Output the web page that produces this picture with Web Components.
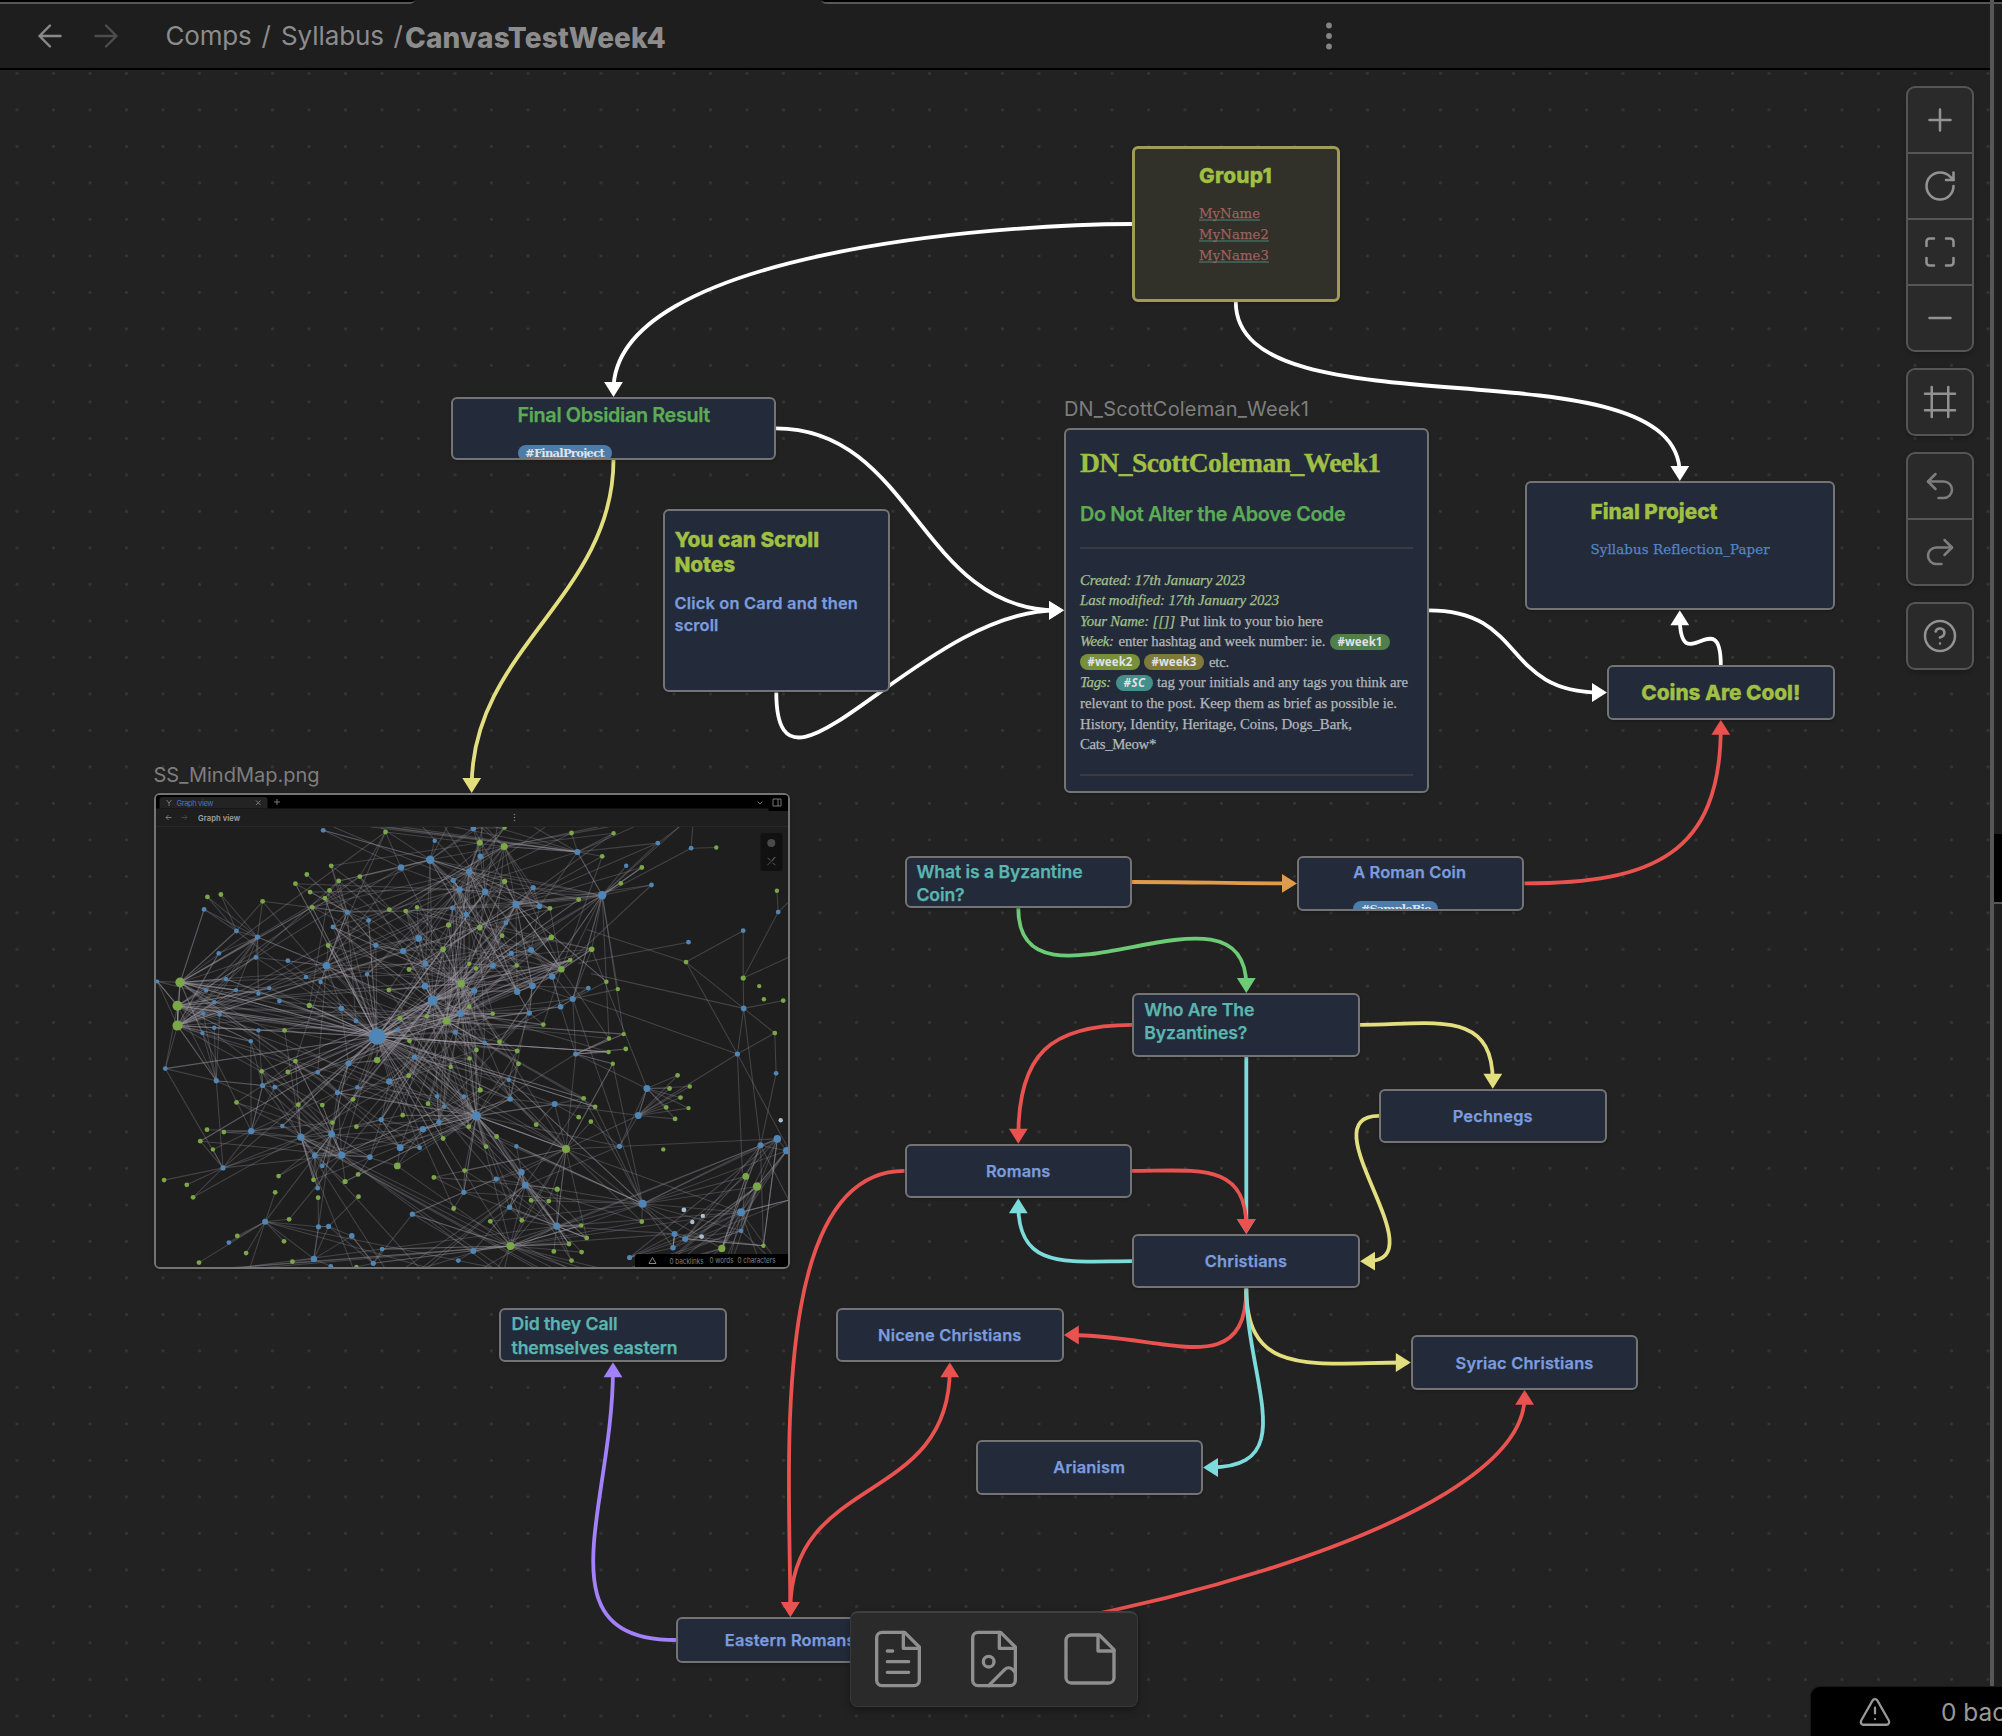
<!DOCTYPE html>
<html lang="en">
<head>
<meta charset="utf-8">
<title>CanvasTestWeek4</title>
<style>
  html, body { margin: 0; height: 100%; background: #1e1e1e; overflow: hidden; }
  body { font-family: Inter, "Liberation Sans", sans-serif; color: #999; }
</style>
</head>
<body>
<app-window>
  <view-header slot="header"></view-header>
  <canvas-board slot="board">
    <canvas-card x="1132" y="145.7" w="207.5" h="156.3" pad="65.5" top="15.5" kind="group">
      <text-line kind="h1" fit="73" lh="25">Group1</text-line>
      <text-line kind="link" fit="61" lh="21" style="margin-top:15px">MyName</text-line>
      <text-line kind="link" fit="70" lh="21">MyName2</text-line>
      <text-line kind="link" fit="70" lh="21">MyName3</text-line>
    </canvas-card>

    <canvas-card x="451" y="397" w="325" h="62.5" pad="66" top="4.5">
      <text-line kind="h2" fit="192.5" lh="25">Final Obsidian Result</text-line>
      <tag-pill fit="79" style="margin-top:17px;--bg:#4f7ba8">#FinalProject</tag-pill>
    </canvas-card>

    <canvas-card x="662.5" y="508.8" w="227.5" h="183.7" pad="11.5" top="17">
      <text-line kind="h1" fit="144.5" lh="25">You can Scroll</text-line>
      <text-line kind="h1" fit="60.500" lh="25">Notes</text-line>
      <text-line kind="h4" fit="183.5" lh="22" style="margin-top:15px">Click on Card and then</text-line>
      <text-line kind="h4" fit="44" lh="22">scroll</text-line>
    </canvas-card>

    <board-label x="1064" y="397" fit="245">DN_ScottColeman_Week1</board-label>
    <canvas-card x="1064" y="428" w="364.7" h="364.6" pad="15.5" top="17">
      <text-line kind="title" fit="300.5" lh="33">DN_ScottColeman_Week1</text-line>
      <text-line kind="h2" fit="265.5" lh="25" style="margin-top:23px">Do Not Alter the Above Code</text-line>
      <rule-line style="margin-top:20px"></rule-line>
      <text-line kind="em" fit="165" lh="20.6" style="margin-top:20.5px">Created: 17th January 2023</text-line>
      <text-line kind="em" fit="199" lh="20.6">Last modified: 17th January 2023</text-line>
      <flow-row>
        <text-line kind="em" fit="95" lh="20.6">Your Name: [[]]</text-line>
        <text-line kind="p" fit="143" lh="20.6" style="margin-left:5px">Put link to your bio here</text-line>
      </flow-row>
      <flow-row>
        <text-line kind="em" fit="33.5" lh="20.6">Week:</text-line>
        <text-line kind="p" fit="207" lh="20.6" style="margin-left:5px">enter hashtag and week number: ie.</text-line>
        <tag-pill fit="45" style="margin-left:4.5px;--bg:#517f4c;--ff:'Noto Sans'">#week1</tag-pill>
      </flow-row>
      <flow-row>
        <tag-pill fit="45" style="--bg:#788f3b;--ff:'Noto Sans'">#week2</tag-pill>
        <tag-pill fit="45" style="margin-left:4px;--bg:#80793c;--ff:'Noto Sans'">#week3</tag-pill>
        <text-line kind="p" fit="20" lh="20.6" style="margin-left:5px">etc.</text-line>
      </flow-row>
      <flow-row>
        <text-line kind="em" fit="31" lh="20.6">Tags:</text-line>
        <tag-pill fit="22" style="margin-left:5px;--bg:#43908b;--ff:'Open Sans';font-style:italic">#SC</tag-pill>
        <text-line kind="p" fit="251" lh="20.6" style="margin-left:4px">tag your initials and any tags you think are</text-line>
      </flow-row>
      <text-line kind="p" fit="317" lh="20.6">relevant to the post. Keep them as brief as possible ie.</text-line>
      <text-line kind="p" fit="272" lh="20.6">History, Identity, Heritage, Coins, Dogs_Bark,</text-line>
      <text-line kind="p" fit="76" lh="20.6">Cats_Meow*</text-line>
      <rule-line style="margin-top:19.500px"></rule-line>
    </canvas-card>

    <canvas-card x="1525" y="481.3" w="309.7" h="129" pad="65" top="16.500">
      <text-line kind="h1" fit="127" lh="25">Final Project</text-line>
      <text-line kind="slab" fit="179" lh="21" style="margin-top:15px">Syllabus Reflection_Paper</text-line>
    </canvas-card>
    <canvas-card x="1607" y="665.3" w="227.7" h="54.5" mid>
      <text-line kind="h1" fit="159" lh="25">Coins Are Cool!</text-line>
    </canvas-card>

    <board-label x="153.500" y="762.5" fit="166">SS_MindMap.png</board-label>
    <canvas-card x="153.5" y="793.3" w="636.5" h="475.5" pad="0" top="0"><graph-shot></graph-shot></canvas-card>

    <canvas-card x="904.5" y="856.2" w="227.5" h="52" pad="11.5" top="2.500">
      <text-line kind="h3" fit="166" lh="23.7">What is a Byzantine</text-line>
      <text-line kind="h3" fit="48" lh="23.7">Coin?</text-line>
    </canvas-card>
    <canvas-card x="1296.7" y="856.2" w="227.7" h="54.4" pad="56" top="4">
      <text-line kind="h4" fit="113" lh="22">A Roman Coin</text-line>
      <tag-pill fit="70" style="margin-top:18px;--bg:#4f7ba8">#SampleBio</tag-pill>
    </canvas-card>
    <canvas-card x="1132.300" y="993" w="227.5" h="63.8" pad="11.5" top="3.500">
      <text-line kind="h3" fit="110" lh="23.900">Who Are The</text-line>
      <text-line kind="h3" fit="103" lh="23.900">Byzantines?</text-line>
    </canvas-card>
    <canvas-card x="1379" y="1088.700" w="227.5" h="54.5" mid><text-line kind="h4" fit="80" lh="22">Pechnegs</text-line></canvas-card>
    <canvas-card x="904.500" y="1143.700" w="227.5" h="54.5" mid><text-line kind="h4" fit="64.500" lh="22">Romans</text-line></canvas-card>
    <canvas-card x="1132.300" y="1233.900" w="227.5" h="54.5" mid><text-line kind="h4" fit="82.500" lh="22">Christians</text-line></canvas-card>
    <canvas-card x="499" y="1307.800" w="228" h="54.5" pad="12" top="3.500">
      <text-line kind="h3" fit="106" lh="23.300">Did they Call</text-line>
      <text-line kind="h3" fit="166" lh="23.300">themselves eastern</text-line>
    </canvas-card>
    <canvas-card x="835.800" y="1307.800" w="228" h="54.5" mid><text-line kind="h4" fit="143.500" lh="22">Nicene Christians</text-line></canvas-card>
    <canvas-card x="1410.800" y="1335.300" w="227.5" h="54.5" mid><text-line kind="h4" fit="138" lh="22">Syriac Christians</text-line></canvas-card>
    <canvas-card x="975.500" y="1440.200" w="227.5" h="54.5" mid><text-line kind="h4" fit="72" lh="22">Arianism</text-line></canvas-card>
    <canvas-card x="676.300" y="1617" w="228" h="46" mid><text-line kind="h4" fit="131" lh="22">Eastern Romans</text-line></canvas-card>
  </canvas-board>
  <side-strip slot="side"></side-strip>
</app-window>

<script>
const icon = (paths, size, sw, color) =>
  `<svg width="${size}" height="${size}" viewBox="0 0 24 24" fill="none" stroke="${color}" stroke-width="${sw}" stroke-linecap="round" stroke-linejoin="round">${paths}</svg>`;
const def = (name, cls) => customElements.define(name, cls);

/* Spreads letter-spacing so that the text fills the width given by "fit". */
function fitText(host, span) {
  const want = parseFloat(host.getAttribute('fit'));
  if (!want) return;
  span.style.letterSpacing = '0px';
  const n = host.textContent.trim().length;
  const now = span.getBoundingClientRect().width;
  span.style.letterSpacing = ((want - now) / n).toFixed(3) + 'px';
}

class AppWindow extends HTMLElement {
  constructor() {
    super();
    this.attachShadow({ mode: 'open' }).innerHTML = `<style>
      :host { display: flex; width: 2002px; height: 1736px; overflow: hidden; background: #1e1e1e; position: relative; }
      .main { display: flex; flex-direction: column; width: 1990px; height: 1736px; }
      status-bar { position: absolute; right: 0; bottom: 0; }
    </style>
    <div class="main"><slot name="header"></slot><slot name="board"></slot></div>
    <slot name="side"></slot><status-bar></status-bar>`;
  }
}

class ViewHeader extends HTMLElement {
  constructor() {
    super();
    this.attachShadow({ mode: 'open' }).innerHTML = `<style>
      :host { display: flex; flex-direction: column; height: 70px; box-sizing: border-box; border-bottom: 2px solid #000; background: #1e1e1e; flex: none; }
      .tabs { display: flex; justify-content: space-between; height: 4px; }
      .tabs i { display: block; box-sizing: border-box; height: 4px; background: #000; border-bottom: 2px solid #575757; }
      .l { width: 415px; border-bottom-right-radius: 6px 4px; }
      .r { width: 1169px; border-bottom-left-radius: 6px 4px; }
      .row { display: flex; align-items: center; height: 64px; padding-left: 32px; box-sizing: border-box; }
      .row svg { display: block; flex: none; }
      .fwd { margin-left: 20px; }
      text-line { white-space: pre; }
      .more { margin-left: 645px; }
    </style>
    <div class="tabs"><i class="l"></i><i class="r"></i></div>
    <div class="row">
      ${icon('<path d="m12 19-7-7 7-7M19 12H5"/>', 36, 1.6, '#8a8a8a')}
      <span class="fwd">${icon('<path d="M5 12h14M12 5l7 7-7 7"/>', 36, 1.6, '#4d4d4d')}</span>
      <text-line kind="crumb" fit="86" lh="36" style="margin-left:41.500px">Comps</text-line>
      <text-line kind="crumb" fit="10" lh="36" style="margin-left:10px">/</text-line>
      <text-line kind="crumb" fit="103" lh="36" style="margin-left:9.500px">Syllabus</text-line>
      <text-line kind="crumb" fit="10" lh="36" style="margin-left:9.500px">/</text-line>
      <text-line kind="page" fit="261" lh="36" style="margin:4px 0 0 1.500px">CanvasTestWeek4</text-line>
      <svg class="more" width="36" height="36" viewBox="0 0 36 36" fill="#858585"><circle cx="18" cy="7.500" r="2.900"/><circle cx="18" cy="18" r="2.900"/><circle cx="18" cy="28.500" r="2.900"/></svg>
    </div>`;
  }
}

class TextLine extends HTMLElement {
  constructor() {
    super();
    this.attachShadow({ mode: 'open' }).innerHTML = `<style>
      :host { display: block; white-space: pre; flex: none; }
      :host([kind=h1]) { font-size: 20.8px; font-weight: 800; color: #a0c044; -webkit-text-stroke: .3px; }
      :host([kind=h2]) { font-size: 19.8px; font-weight: 600; color: #5cab55; -webkit-text-stroke: .25px; }
      :host([kind=h3]) { font-size: 17.6px; font-weight: 600; color: #5bb5b0; -webkit-text-stroke: .25px; }
      :host([kind=h4]) { font-size: 16.4px; font-weight: 600; color: #7b9cdf; -webkit-text-stroke: .25px; }
      :host([kind=title]) { font: 700 27.6px "Liberation Serif", serif; color: #a0c044; -webkit-text-stroke: .3px; }
      :host([kind=p]) { font: 14.8px "Liberation Serif", serif; color: #b4b6b8; -webkit-text-stroke: .25px; }
      :host([kind=em]) { font: italic 14.8px "Liberation Serif", serif; color: #a3c08a; -webkit-text-stroke: .25px; }
      :host([kind=link]) { font: 13.2px "DejaVu Serif", serif; color: #9c615c; -webkit-text-stroke: .25px; }
      :host([kind=link]) span { text-decoration: underline #3d5b50 1.5px; text-underline-offset: 1px; text-decoration-skip-ink: none; }
      :host([kind=slab]) { font: 13.4px "DejaVu Serif", serif; color: #5585c5; -webkit-text-stroke: .25px; }
      :host([kind=crumb]) { font-size: 26px; color: #8c8c8c; }
      :host([kind=page]) { font-size: 28px; font-weight: 800; color: #8c8c8c; }
      :host([kind=status]) { font-size: 24.5px; color: #999; }
    </style><span><slot></slot></span>`;
  }
  connectedCallback() {
    this.style.lineHeight = this.getAttribute('lh') + 'px';
    this.style.height = this.getAttribute('lh') + 'px';
    requestAnimationFrame(() => fitText(this, this.shadowRoot.querySelector('span')));
  }
}

class TagPill extends HTMLElement {
  constructor() {
    super();
    this.attachShadow({ mode: 'open' }).innerHTML = `<style>
      :host { display: block; flex: none; width: max-content; height: 16px; line-height: 16px; padding: 0 7.5px; border-radius: 8px;
        background: var(--bg); color: #dfe3e6; font-family: var(--ff, "DejaVu Serif"), serif; font-weight: 700; font-size: 11.5px; white-space: pre; }
    </style><span><slot></slot></span>`;
  }
  connectedCallback() { requestAnimationFrame(() => fitText(this, this.shadowRoot.querySelector('span'))); }
}

class FlowRow extends HTMLElement {
  constructor() {
    super();
    this.attachShadow({ mode: 'open' }).innerHTML =
      `<style>:host { display: flex; align-items: center; height: 20.6px; }</style><slot></slot>`;
  }
}

class RuleLine extends HTMLElement {
  constructor() {
    super();
    this.attachShadow({ mode: 'open' }).innerHTML =
      `<style>:host { display: block; height: 2px; flex: none; background: #383b3f; }</style>`;
  }
}

class BoardLabel extends HTMLElement {
  constructor() {
    super();
    this.attachShadow({ mode: 'open' }).innerHTML = `<style>
      :host { position: absolute; font-size: 20px; line-height: 24px; color: #7e7e7e; white-space: pre; }
    </style><span><slot></slot></span>`;
  }
  connectedCallback() {
    this.style.left = this.getAttribute('x') + 'px';
    this.style.top = (this.getAttribute('y') - 70) + 'px';
    requestAnimationFrame(() => fitText(this, this.shadowRoot.querySelector('span')));
  }
}

class CanvasCard extends HTMLElement {
  constructor() {
    super();
    this.attachShadow({ mode: 'open' }).innerHTML = `<style>
      :host { position: absolute; display: flex; flex-direction: column; box-sizing: border-box; overflow: hidden;
        border: 2px solid #747474; border-radius: 6px; background: #232b3b; box-shadow: 0 1px 3px rgba(0,0,0,.25); }
      :host([kind=group]) { border: 3px solid #a09c58; background: #313029; }
      :host([mid]) { align-items: center; justify-content: center; }
    </style><slot></slot>`;
  }
  connectedCallback() {
    const g = n => parseFloat(this.getAttribute(n)) || 0;
    Object.assign(this.style, {
      left: g('x') + 'px', top: (g('y') - 70) + 'px', width: g('w') + 'px', height: g('h') + 'px',
      padding: this.hasAttribute('mid') ? '0' : `${Math.max(0, g('top') - 1)}px ${Math.max(0, g('pad') - 1.5)}px 0`
    });
  }
}

/* Each edge: colour, start x/y/side, end x/y/side, and whether both ends carry an arrow. */
const W = '#ffffff', Y = '#e3df7e', R = '#e9524f', C = '#7cdcdc', G = '#6ccb74', O = '#e09b4c', P = '#a281fa';
const EDGES = [
  [W, 1132, 224, 'l', 613.5, 397, 't'],
  [W, 1235.8, 302, 'b', 1679.8, 481, 't'],
  [W, 776, 428.3, 'r', 1064, 610.3, 'l'],
  [W, 776.3, 692.5, 'b', 1064, 610.3, 'l'],
  [W, 1428.7, 610.3, 'r', 1607, 692.5, 'l'],
  [W, 1720.8, 665.3, 't', 1679.8, 610.3, 'b'],
  [Y, 613.5, 459.5, 'b', 471.7, 793, 't'],
  [O, 1132, 882, 'r', 1297, 883.4, 'l'],
  [R, 1524.5, 883.4, 'r', 1720.8, 719.8, 'b'],
  [G, 1018.3, 908.2, 'b', 1246.3, 993, 't'],
  [R, 1132.3, 1024.8, 'l', 1018.3, 1143.7, 't'],
  [C, 1246.3, 1056.8, 'b', 1246.3, 1233.9, 't'],
  [Y, 1360, 1024.8, 'r', 1492.8, 1088.7, 't'],
  [Y, 1379, 1115.9, 'l', 1360, 1261.2, 'r'],
  [R, 1132, 1170.9, 'r', 1246.3, 1233.9, 't'],
  [C, 1132.3, 1261.2, 'l', 1018.3, 1198.2, 'b'],
  [R, 904.5, 1170.9, 'l', 790.3, 1617, 't'],
  [R, 790.3, 1617, 't', 949.8, 1362.3, 'b', true],
  [R, 1246.3, 1288.4, 'b', 1063.8, 1335, 'r'],
  [Y, 1246.3, 1288.4, 'b', 1410.8, 1362.5, 'l'],
  [C, 1246.3, 1288.4, 'b', 1203, 1467.5, 'r'],
  [P, 676.3, 1640, 'l', 613, 1362.3, 'b'],
  [R, 904.3, 1640, 'r', 1524.6, 1389.8, 'b'],
];
const DIR = { l: [-1, 0], r: [1, 0], t: [0, -1], b: [0, 1] };
function edgeSvg([color, x1, y1, s1, x2, y2, s2, both]) {
  const d = Math.min(137, Math.max(64, Math.hypot(x2 - x1, y2 - y1) / 2));
  const [ax, ay] = DIR[s1], [bx, by] = DIR[s2], gap = 7;
  const sx = both ? x1 + ax * gap : x1, sy = both ? y1 + ay * gap : y1;
  const ex = x2 + bx * gap, ey = y2 + by * gap;
  const tip = (x, y, dx, dy) => {
    const L = 15, H = 9.4, cx = x + dx * L, cy = y + dy * L;
    return `<path fill="${color}" d="M${x} ${y}L${cx - dy * H} ${cy + dx * H}L${cx + dy * H} ${cy - dx * H}Z"/>`;
  };
  return `<path fill="none" stroke="${color}" stroke-width="3.8" d="M${sx} ${sy}C${sx + ax * d} ${sy + ay * d} ${ex + bx * d} ${ey + by * d} ${ex} ${ey}"/>`
    + tip(x2, y2, bx, by) + (both ? tip(x1, y1, ax, ay) : '');
}

class CanvasBoard extends HTMLElement {
  constructor() {
    super();
    this.attachShadow({ mode: 'open' }).innerHTML = `<style>
      :host { display: block; position: relative; flex: 1; overflow: hidden; background: #222; }
      .bg { position: absolute; left: 0; top: 0; display: block; }
      canvas-controls { position: absolute; top: 16px; right: 16px; }
      card-menu { position: absolute; left: 850px; top: 1540.5px; }
    </style>
    <svg class="bg" width="1990" height="1666" viewBox="0 70 1990 1666">
      <defs><pattern id="dots" x="-1.25" y="55.1" width="36.5" height="36.5" patternUnits="userSpaceOnUse"><circle cx="18.25" cy="18.25" r="1.5" fill="#373737"/></pattern></defs>
      <rect x="0" y="70" width="1990" height="1666" fill="url(#dots)"/>
      ${EDGES.map(edgeSvg).join('')}
    </svg>
    <slot></slot>
    <canvas-controls></canvas-controls>
    <card-menu></card-menu>`;
  }
}

class CanvasControls extends HTMLElement {
  constructor() {
    super();
    const b = (p, c = '#929292') => `<div class="b">${icon(p, 36, 1.7, c)}</div>`;
    this.attachShadow({ mode: 'open' }).innerHTML = `<style>
      :host { display: flex; flex-direction: column; gap: 16px; width: 68px; }
      .g { display: flex; flex-direction: column; border: 2px solid #555; border-radius: 9px; background: #2a2a2a; overflow: hidden; box-shadow: 0 2px 4px rgba(0,0,0,.25); }
      .b { display: flex; align-items: center; justify-content: center; height: 64px; }
      .b + .b { border-top: 2px solid #555; }
      .b svg { display: block; }
    </style>
    <div class="g">${b('<path d="M12 5v14M5 12h14"/>')}
      ${b('<path d="M21 12a9 9 0 1 1-9-9c2.52 0 4.93 1 6.74 2.74L21 8"/><path d="M21 3v5h-5"/>')}
      ${b('<path d="M8 3H5a2 2 0 0 0-2 2v3M21 8V5a2 2 0 0 0-2-2h-3M3 16v3a2 2 0 0 0 2 2h3M16 21h3a2 2 0 0 0 2-2v-3"/>')}
      ${b('<path d="M5 12h14"/>')}</div>
    <div class="g">${b('<path d="M22 6.500H2M22 17.500H2M6.500 2v20M17.500 2v20"/>')}</div>
    <div class="g">${b('<path d="M9 14 4 9l5-5"/><path d="M4 9h10.5a5.5 5.5 0 0 1 0 11H11"/>', '#7d7d7d')}
      ${b('<path d="m15 14 5-5-5-5"/><path d="M20 9H9.500a5.500 5.500 0 0 0 0 11H13"/>', '#7d7d7d')}</div>
    <div class="g">${b('<circle cx="12" cy="12" r="10"/><path d="M9.090 9a3 3 0 0 1 5.830 1c0 2-3 3-3 3M12 17h.01"/>')}</div>`;
  }
}

class CardMenu extends HTMLElement {
  constructor() {
    super();
    const file = '<path d="M14.500 2H6a2 2 0 0 0-2 2v16a2 2 0 0 0 2 2h12a2 2 0 0 0 2-2V7.500L14.500 2z"/><path d="M14 2v6h6"/>';
    const i = p => icon(p, 64, 1.25, '#8f8f8f');
    this.attachShadow({ mode: 'open' }).innerHTML = `<style>
      :host { display: flex; box-sizing: border-box; width: 288px; height: 96px; padding: 15px; gap: 32px; align-items: center;
        border: 1px solid #383838; border-top: 2px solid #3f3f3f; border-radius: 8px; background: #2a2a2a; box-shadow: 0 3px 8px rgba(0,0,0,.35); }
      svg { display: block; flex: none; }
    </style>
    ${i(file + '<path d="M16 13H8M16 17H8M10 9H8"/>')}
    ${i(file + '<circle cx="10" cy="13" r="2"/><path d="m20 17-1.090-1.090a2 2 0 0 0-2.820 0L10 22"/>')}
    ${i('<path d="M15.500 3H5a2 2 0 0 0-2 2v14a2 2 0 0 0 2 2h14a2 2 0 0 0 2-2V8.500L15.500 3z"/><path d="M15 3v6h6"/>')}`;
  }
}

class SideStrip extends HTMLElement {
  constructor() {
    super();
    this.attachShadow({ mode: 'open' }).innerHTML = `<style>
      :host { display: flex; width: 12px; height: 1736px; flex: none; }
      .bar { width: 4px; background: #575757; }
      .col { flex: 1; display: flex; flex-direction: column; }
      .a { height: 4px; background: #000; border-bottom: 2px solid #575757; box-sizing: border-box; }
      .b { height: 830px; background: #1e1e1e; }
      .c { height: 70px; background: #000; border-bottom: 2px solid #575757; box-sizing: border-box; }
      .d { flex: 1; background: #1e1e1e; }
    </style><div class="bar"></div><div class="col"><div class="a"></div><div class="b"></div><div class="c"></div><div class="d"></div></div>`;
  }
}

class StatusBar extends HTMLElement {
  constructor() {
    super();
    this.attachShadow({ mode: 'open' }).innerHTML = `<style>
      :host { display: flex; align-items: center; box-sizing: border-box; width: 191px; height: 49px; padding-left: 47px; overflow: hidden;
        background: #000; border-top-left-radius: 9px; box-shadow: 0 0 0 1px #17181c; }
      svg { display: block; flex: none; }
    </style>
    ${icon('<path d="m21.730 18-8-14a2 2 0 0 0-3.480 0l-8 14A2 2 0 0 0 4 21h16a2 2 0 0 0 1.730-3M12 9v4M12 17h.01"/>', 34, 1.6, '#999')}
    <text-line kind="status" lh="46" style="margin-left:49px">0 backlinks</text-line>`;
  }
}

/* Graph preview: node positions in a 1568 by 1568 space, [x, y, r]. */
const BLUE = [[562,846,8.3],[694,740,5],[798,1081,4.6],[1097,428,4.2],[688,323,4.2],[442,637,3.8],[1193,1341,4],[1427,1366,4],[989,1407,3.6],[1183,1080,3.4],[1203,1000,3.4],[381,1144,3.6],[478,1197,3.6],[454,1135,3.4],[892,455,3.6],[661,556,3.4],[676,697,3.4],[760,778,3.6],[914,1286,3.4],[1027,735,3],[1038,300,3],[781,358,3.2],[619,346,3.2],[819,418,3.2],[758,411,3],[743,384,2.6],[807,313,2.8],[791,230,2.8],[434,236,2.4],[699,267,2.2],[1229,274,2.4],[1308,289,2.4],[1154,341,2.2],[1214,398,2.4],[933,406,2.6],[948,461,2.8],[741,466,2.4],[774,485,2.6],[868,510,2.4],[151,470,2.4],[228,534,2.4],[278,552,2.6],[186,600,2.4],[274,612,2.4],[350,622,2.4],[491,478,2.6],[542,503,2.4],[457,522,2.4],[559,576,2.6],[624,593,3],[677,631,3],[837,637,3],[928,590,3],[881,600,2.6],[978,669,3.2],[931,696,3.4],[895,714,3.2],[793,711,3],[998,758,2.8],[924,777,2.6],[1064,703,2.4],[538,662,2.2],[393,670,2.2],[428,685,2.2],[203,676,2.2],[156,710,2.2],[227,709,2.2],[280,719,2.2],[306,703,2.2],[330,741,2.4],[175,745,2.2],[149,778,2.2],[188,781,2.2],[175,820,2.2],[147,836,2.2],[280,828,2.2],[262,860,2.2],[477,763,2.8],[512,800,2.4],[611,827,2.2],[748,834,2.4],[818,865,2.2],[651,907,2.6],[494,926,3],[421,952,2.2],[59,941,2.4],[180,977,2.6],[290,991,2.6],[319,996,2.4],[515,996,2.2],[468,1012,2.6],[591,979,3.2],[705,1023,2.4],[768,1024,2.4],[721,1054,2.2],[875,974,2.2],[878,1031,2.8],[984,1046,3],[1034,898,2.6],[572,1092,2.6],[709,1100,2.6],[671,1120,3.2],[263,1126,3.2],[337,1111,2.2],[617,1175,3.4],[663,1175,2.4],[414,1198,2.8],[545,1203,2.8],[432,1229,2.4],[196,1235,2.6],[893,1171,2.2],[1138,1171,2.6],[905,1248,3.2],[845,1268,2.6],[768,1307,2.6],[421,1295,2.4],[877,1351,2.6],[646,1372,2.6],[296,1394,3],[423,1409,2.6],[447,1408,2.6],[502,1436,2.8],[210,1456,2.4],[412,1504,3.2],[574,1475,2.4],[553,1517,2.6],[791,1481,3],[755,1509,2.4],[452,1526,2.4],[1162,1500,2.6],[1265,1471,2.8],[1269,1430,3],[1294,1445,3],[1427,1421,2.4],[1473,1168,3],[1513,1149,3.8],[1535,1184,3.6],[1515,478,2.4],[1432,533,2.4],[1302,567,2.4],[1433,763,2.8],[1418,898,2.6],[1510,955,2.4],[40,683,2]];
const GREEN = [[94,686,4.8],[88,755,5],[88,814,5],[762,690,3.8],[727,800,3.8],[1011,1179,4],[879,1466,4],[1465,1290,4.2],[1438,1260,3.4],[1381,1473,3.6],[610,1229,3.4],[864,284,3.6],[806,273,3],[562,916,3.2],[1000,647,3.2],[582,241,2.4],[865,228,2.2],[1024,244,2.4],[1124,245,2.2],[1368,287,2.2],[1097,313,2.4],[1191,346,2.4],[1141,393,2.4],[1041,441,2.4],[973,467,2.4],[865,387,2.6],[453,341,2.4],[395,367,2.4],[471,386,2.4],[521,373,2.4],[368,394,2.4],[449,414,2.4],[403,419,2.4],[438,437,2.4],[408,464,2.4],[290,446,2.4],[191,426,2.4],[159,433,2.4],[591,471,2.4],[630,475,2.4],[657,464,2.2],[732,516,2.6],[806,524,2.8],[859,548,2.4],[976,553,2.8],[1072,588,2.8],[1021,620,2.4],[446,577,2.4],[719,588,2.8],[638,648,2.4],[781,631,2.2],[797,645,2.2],[894,636,2.2],[590,709,2.4],[401,754,2.6],[342,828,2.4],[616,792,2.4],[680,786,2.2],[781,758,2.4],[837,779,2.2],[957,811,2.4],[1107,684,2.2],[1134,706,2.2],[639,859,2.4],[853,862,2.4],[798,886,2.4],[782,911,2.2],[737,936,2.2],[895,889,2.4],[898,927,2.4],[637,962,2.4],[807,1004,2.6],[368,919,2.4],[350,951,2.4],[288,949,2.4],[228,1041,2.4],[375,1048,2.4],[432,1049,2.4],[505,1032,2.4],[456,1101,2.4],[513,1113,2.4],[623,1079,2.4],[683,1045,2.4],[780,1113,2.4],[719,1148,2.4],[821,1172,2.4],[846,1142,2.4],[940,1107,2.4],[1041,1085,2.4],[1070,1098,2.4],[1080,1054,2.4],[1053,1029,2.4],[1148,839,2.2],[1113,852,2.2],[1112,892,2.2],[1153,883,2.4],[1122,927,2.2],[1276,961,2.4],[1257,1000,2.4],[1305,994,2.2],[1283,1027,2.4],[1249,1056,2.4],[1302,1058,2.2],[1270,1090,2.4],[1242,1180,2.2],[158,1122,2.4],[198,1129,2.4],[142,1156,2.4],[172,1180,2.2],[56,1271,2.4],[110,1285,2.4],[125,1322,2.4],[328,1259,2.4],[320,1307,2.4],[411,1270,2.4],[486,1275,2.6],[517,1254,2.4],[422,1323,2.4],[518,1320,2.4],[697,1263,2.4],[770,1243,2.4],[744,1355,2.4],[831,1393,2.4],[906,1390,2.4],[928,1331,2.4],[970,1333,2.4],[990,1298,2.6],[1047,1405,2.2],[1060,1442,2.4],[1018,1460,2.4],[1048,1484,2.4],[982,1482,2.4],[1024,1509,2.4],[1191,1394,2.4],[353,1387,2.4],[230,1436,2.4],[341,1452,2.4],[251,1487,2.4],[139,1515,2.4],[361,1512,2.4],[513,1528,2.2],[1512,415,2.2],[1296,626,2.4],[1432,673,2.6],[1470,697,2.2],[1481,736,2.2],[1527,740,2.4],[1507,836,2.4],[1480,1465,2.2]];
const PALE = [[1521,1094,2.2],[1291,1359,2.4],[1336,1377,2.2],[1311,1395,2.2],[1333,1438,2.4]];

class GraphShot extends HTMLElement {
  constructor() {
    super();
    let seed = 7;
    const rnd = () => (seed = (seed * 16807) % 2147483647) / 2147483647;
    const X = x => (140 + x / 2.3758).toFixed(1), Yc = y => (750.5 + y / 2.9585).toFixed(1);
    const lines = [];
    const link = (a, b) => lines.push(`<path d="M${X(a[0])} ${Yc(a[1])}L${X(b[0])} ${Yc(b[1])}"/>`);
    const all = [...BLUE, ...GREEN];
    const dist = (a, b) => Math.hypot(a[0] - b[0], a[1] - b[1]);
    const near = (h, max) => all.filter(n => n !== h && dist(n, h) < max);
    const pick = l => l[Math.floor(rnd() * l.length)];
    const core = all.filter(n => n[0] < 1080 && n[0] > 400 && n[1] < 1200);
    const fan = (h, count, max) => { const l = near(h, max).filter(n => n[0] < 1240); for (let i = 0; i < count && l.length; i++) link(h, pick(l)); };
    const [a, b, c, d] = BLUE;
    fan(a, 110, 560); fan(b, 42, 460); fan(c, 46, 440); fan(d, 20, 520);
    fan(BLUE[4], 12, 380); fan(BLUE[5], 12, 380);
    GREEN.slice(0, 3).forEach(h => { fan(h, 18, 240); for (let i = 0; i < 12; i++) link(h, pick(core)); link(h, a); link(h, a); });
    fan(GREEN[3], 44, 440); fan(GREEN[4], 48, 460);
    fan(GREEN[5], 20, 380); fan(GREEN[6], 20, 380);
    fan(BLUE[8], 14, 320); fan(BLUE[11], 14, 340); fan(BLUE[12], 18, 400); fan(BLUE[13], 16, 340);
    fan(BLUE[6], 14, 500); fan(BLUE[18], 14, 360); fan(GREEN[14], 16, 400); fan(BLUE[14], 22, 400);
    fan(GREEN[11], 12, 420); fan(BLUE[21], 18, 420); fan(BLUE[102], 8, 380); fan(BLUE[17], 26, 340); fan(BLUE[24], 16, 420);
    for (let i = 0; i < 130; i++) { const n = pick(core); const m = pick(core); if (dist(n, m) < 460) link(n, m); }
    all.forEach(n => {
      if (n[0] > 1240) return;
      const l = BLUE.filter(m => m !== n && m[2] >= 2.6 && dist(m, n) < 260).sort((p, q) => dist(p, n) - dist(q, n));
      if (l[0]) link(n, l[0]);
      if (n[2] > 2.4 && l[2]) link(n, l[2]);
    });
    const corner = [[1473,1168],[1513,1149],[1535,1184],[1438,1260],[1465,1290],[1427,1366],[1427,1421],[1381,1473],[1269,1430],[1294,1445],[1265,1471],[1480,1465],[1540,1330]];
    for (let i = 0; i < 46; i++) link(pick(corner), pick(corner));
    corner.slice(0, 8).forEach(n => link(n, [1193, 1341]));
    [[1011,1179],[989,1407],[1162,1500],[879,1466]].forEach(n => { link(n, corner[1]); link(n, corner[5]); link(n, corner[8]); });
    for (let i = 0; i < 14; i++) link(corner[4 + i % 4], [1150 + rnd() * 390, 1530]);
    for (let i = 0; i < 26; i++) link(pick([BLUE[18], BLUE[8], GREEN[6], BLUE[118], BLUE[11], BLUE[12]]), [200 + rnd() * 900, 1530]);
    for (let i = 0; i < 22; i++) link(pick([BLUE[4], BLUE[21], BLUE[23], BLUE[24], GREEN[11], BLUE[20]]), [430 + rnd() * 760, 226]);
    [[1203,1000],[1183,1080]].forEach(h => GREEN.slice(97, 104).forEach(n => link(h, n)));
    GREEN.slice(92, 97).forEach(n => link([1034, 898], n));
    [[1302,567,1040,630],[1296,626,1060,530],[1432,533,1296,626],[1296,626,1433,763],[1432,673,1433,763],[1432,533,1432,673],[1433,763,1070,660],[1433,763,1418,898],[1418,898,1507,836],[1507,836,1510,955],[1418,898,1040,730],[1418,898,1183,1080],[1515,478,1432,673],[1512,415,1515,478],[1433,763,1527,740],[1418,898,1430,1250],[1433,763,1473,1168],[1418,898,1296,626],[1540,612,1432,673],[1507,836,1433,763],[1540,448,1515,478],[1418,898,1540,1180],[1072,588,1203,1000],[1027,735,1193,1341],[1097,428,1308,289],[1097,428,1229,274],[1097,428,1280,226],[1308,289,1368,287],[1308,289,1312,226],[1229,274,1280,226],[1510,955,1473,1168],[59,941,196,1235],[59,941,88,814],[228,534,159,433],[228,534,191,426],[228,534,151,470],[228,534,290,446],[290,446,491,478]]
      .forEach(([x, y, u, v]) => link([x, y], [u, v]));
    const dots = (l, f) => l.map(n => `<circle cx="${X(n[0])}" cy="${Yc(n[1])}" r="${n[2]}" fill="${f}"/>`).join('');
    this.attachShadow({ mode: 'open' }).innerHTML = `<style>
      :host { display: block; width: 633px; height: 472px; background: #1e1e1e; }
      svg { display: block; } text { font-family: Inter, sans-serif; font-size: 7.6px; }
    </style>
    <svg width="633" height="472" viewBox="155.5 795 633 472">
      <g fill="none" stroke="#a6a4ac" stroke-opacity=".27" stroke-width="1.1">${lines.join('')}</g>
      ${dots(BLUE, '#4f86b5')}${dots(GREEN, '#7aa747')}${dots(PALE, '#a9bfcd')}
      <rect x="155" y="795" width="634" height="31.500" fill="#1e1e1e"/>
      <rect x="155" y="795" width="634" height="13.500" fill="#000"/>
      <path d="M159 808.500V800q0-3 3-3h102q3 0 3 3v8.500z" fill="#232323"/>
      <rect x="768" y="795" width="21" height="16" fill="#000"/>
      <path d="M155 826.500H789" stroke="#282828"/>
      <text x="176" y="805.800" fill="#3f78b8" textLength="37">Graph view</text>
      <text x="197.500" y="820.500" fill="#a0a0a0" font-weight="600" textLength="42">Graph view</text>
      <g fill="none" stroke="#777" stroke-width="1">
        <path d="M166 800l2.500 3v3M171 800l-2.500 3M255.500 800.500l4.500 4.500M260 800.500l-4.500 4.500M273.500 802h6M276.500 799v6M757 801.500l2.500 2.500 2.500-2.500M772.500 799h8v7h-8zM777.500 799v7M171 817.500h-5.500M168 815l-2.500 2.500 2.500 2.500"/>
        <path d="M181 817.500h5.500M184 815l2.500 2.500-2.500 2.500" stroke="#444"/>
      </g>
      <g fill="#777"><circle cx="514" cy="814.500" r=".8"/><circle cx="514" cy="817.500" r=".8"/><circle cx="514" cy="820.500" r=".8"/></g>
      <rect x="760" y="833" width="22" height="38" rx="3" fill="#111"/>
      <circle cx="770.800" cy="843" r="4" fill="#4a4a4a"/><path d="M767 865l8-8M767 858l3 2M772 863l3 2M774 857l-2 4" stroke="#555" fill="none"/>
      <path d="M634.500 1267v-10q0-3 3-3H789v13z" fill="#000"/>
      <path d="M652 1257.500l3.500 6h-7z" fill="none" stroke="#888"/>
      <g fill="#808080"><text x="669" y="1263.500" textLength="34" lengthAdjust="spacingAndGlyphs">0 backlinks</text><text x="709" y="1263" textLength="24" lengthAdjust="spacingAndGlyphs">0 words</text><text x="737" y="1263" textLength="38" lengthAdjust="spacingAndGlyphs">0 characters</text></g>
    </svg>`;
  }
}

def('text-line', TextLine); def('tag-pill', TagPill); def('flow-row', FlowRow); def('rule-line', RuleLine);
def('board-label', BoardLabel); def('graph-shot', GraphShot); def('canvas-card', CanvasCard);
def('canvas-controls', CanvasControls); def('card-menu', CardMenu); def('status-bar', StatusBar);
def('canvas-board', CanvasBoard); def('view-header', ViewHeader); def('side-strip', SideStrip); def('app-window', AppWindow);
</script>
</body>
</html>
